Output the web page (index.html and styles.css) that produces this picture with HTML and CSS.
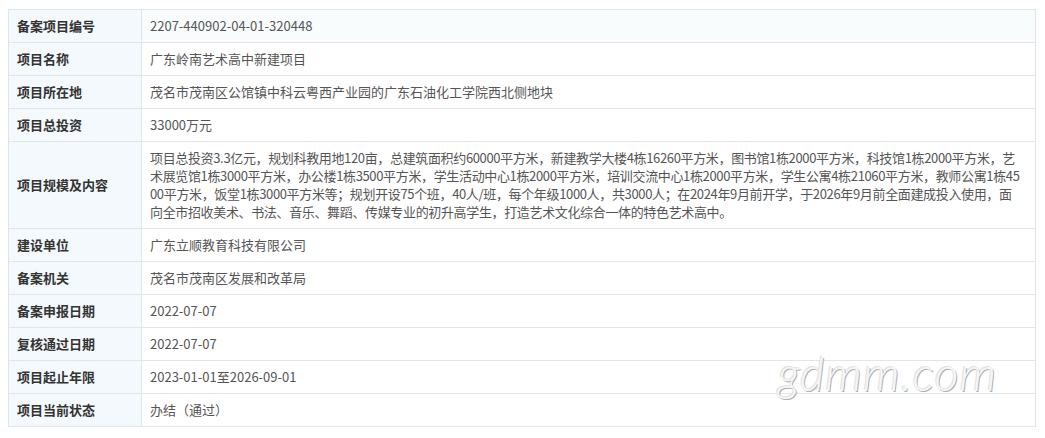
FILE: index.html
```html
<!DOCTYPE html>
<html lang="zh-CN">
<head>
<meta charset="utf-8">
<title>备案项目信息</title>
<link rel="stylesheet" href="styles.css">
</head>
<body>
<div class="wrap">
<table class="info">
  <colgroup><col class="c-label"><col class="c-value"></colgroup>
  <tr class="hover"><th>备案项目编号</th><td>2207-440902-04-01-320448</td></tr>
  <tr><th>项目名称</th><td>广东岭南艺术高中新建项目</td></tr>
  <tr><th>项目所在地</th><td>茂名市茂南区公馆镇中科云粤西产业园的广东石油化工学院西北侧地块</td></tr>
  <tr><th>项目总投资</th><td>33000万元</td></tr>
  <tr><th>项目规模及内容</th><td class="long"><span class="ln">项目总投资3.3亿元，规划科教用地120亩，总建筑面积约60000平方米，新建教学大楼4栋16260平方米，图书馆1栋2000平方米，科技馆1栋2000平方米，艺</span><br><span class="ln">术展览馆1栋3000平方米，办公楼1栋3500平方米，学生活动中心1栋2000平方米，培训交流中心1栋2000平方米，学生公寓4栋21060平方米，教师公寓1栋45</span><br><span class="ln">00平方米，饭堂1栋3000平方米等；规划开设75个班，40人/班，每个年级1000人，共3000人；在2024年9月前开学，于2026年9月前全面建成投入使用，面</span><br><span class="ln">向全市招收美术、书法、音乐、舞蹈、传媒专业的初升高学生，打造艺术文化综合一体的特色艺术高中。</span></td></tr>
  <tr><th>建设单位</th><td>广东立顺教育科技有限公司</td></tr>
  <tr><th>备案机关</th><td>茂名市茂南区发展和改革局</td></tr>
  <tr><th>备案申报日期</th><td>2022-07-07</td></tr>
  <tr><th>复核通过日期</th><td>2022-07-07</td></tr>
  <tr><th>项目起止年限</th><td>2023-01-01至2026-09-01</td></tr>
  <tr><th>项目当前状态</th><td>办结（通过）</td></tr>
</table>
<div class="watermark">gdmm.com</div>
</div>
</body>
</html>
```

FILE: styles.css
```css
html, body {
  margin: 0;
  padding: 0;
  background: #ffffff;
}
body {
  padding: 9px 0 0 8px;
  font-family: "Noto Sans CJK SC", "Noto Sans", sans-serif;
  font-size: 13px;
}
.wrap {
  position: relative;
  width: 1028px;
}
.info {
  width: 1028px;
  table-layout: fixed;
  border-collapse: collapse;
  border: 1px solid #e2e5e7;
}
.c-label {
  width: 133px;
}
.info th, .info td {
  border: 1px solid #e2e5e7;
  line-height: 18px;
  padding: 7px 8px 7px 8px;
  text-align: left;
  vertical-align: middle;
}
.info th {
  background: #f3f9fc;
  color: #333333;
  font-weight: bold;
}
.info td {
  color: #555555;
  font-weight: normal;
}
.info td.long {
  letter-spacing: -0.35px;
}
.info tr.hover td {
  background: #f8fcfd;
}
.ln {
  white-space: nowrap;
}
.watermark {
  position: absolute;
  left: 770px;
  top: 336px;
  font-family: Lato, "DejaVu Sans", sans-serif;
  font-weight: 300;
  font-style: italic;
  font-size: 47px;
  letter-spacing: 1px;
  color: #f6f6f6;
  text-shadow: 1px 1px 0 #b0b0b0, -1px -1px 0 #e2e2e2;
}
```
